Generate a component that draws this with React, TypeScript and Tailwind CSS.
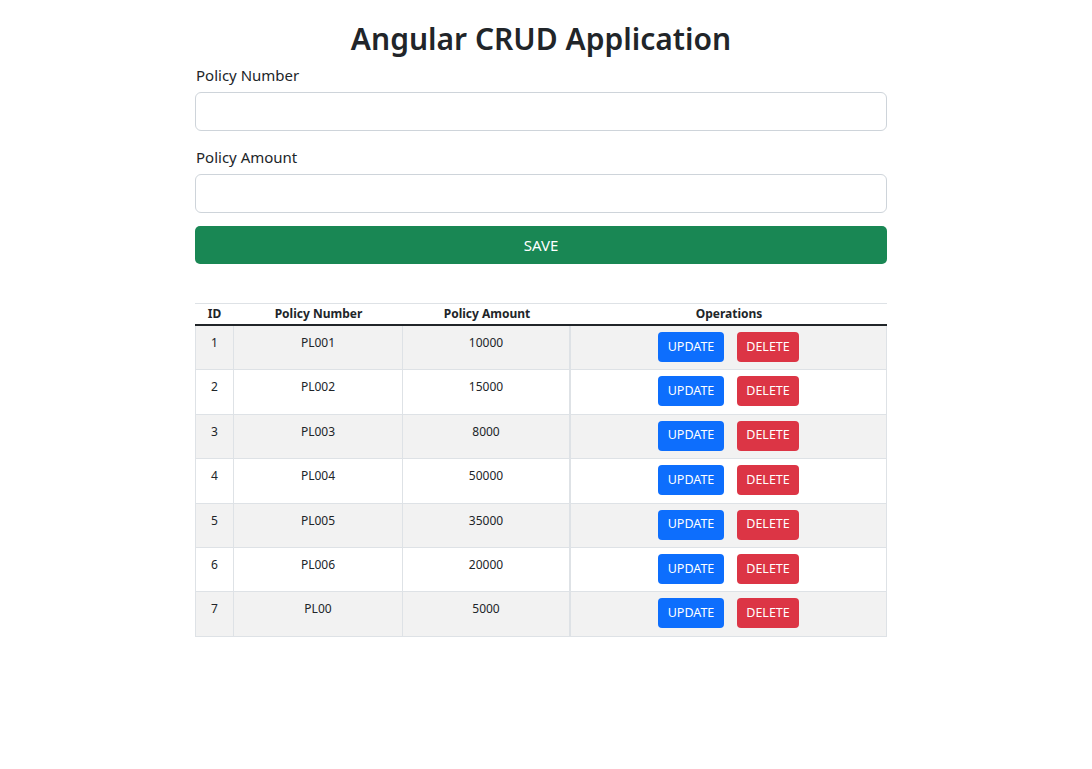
import React from 'react';

interface Policy {
  id: number;
  number: string;
  amount: number;
}

const policies: Policy[] = [
  { id: 1, number: 'PL001', amount: 10000 },
  { id: 2, number: 'PL002', amount: 15000 },
  { id: 3, number: 'PL003', amount: 8000 },
  { id: 4, number: 'PL004', amount: 50000 },
  { id: 5, number: 'PL005', amount: 35000 },
  { id: 6, number: 'PL006', amount: 20000 },
  { id: 7, number: 'PL00', amount: 5000 },
];

const font = "font-['Noto_Sans','Liberation_Sans',sans-serif]";

const App: React.FC = () => {
  return (
    <div className={`min-h-screen bg-white text-[#212529] ${font}`}>
      <div className="w-[692px] ml-[195px] pt-[18px]">
        <h1 className="text-center text-[30px] leading-[42px] font-semibold">Angular CRUD Application</h1>

        {/* Form */}
        <div className="mt-[3px]">
          <label className="block text-[15px] leading-[24px] pl-px">Policy Number</label>
          <input className="mt-[5px] block w-full h-[39px] border border-[#ced4da] rounded-[6px] outline-none" />
        </div>
        <div className="mt-[14px]">
          <label className="block text-[15px] leading-[24px] pl-px">Policy Amount</label>
          <input className="mt-[5px] block w-full h-[39px] border border-[#ced4da] rounded-[6px] outline-none" />
        </div>
        <button className="mt-[13px] w-full h-[38px] bg-[#198754] text-white text-[15px] rounded-[5px]">SAVE</button>

        {/* Table */}
        <div className="mt-[39px] text-[12px]">
          <div className="flex h-[23px] border-t border-[#dee2e6] border-b-2 border-b-[#212529] font-bold items-center">
            <div className="w-[39px] text-center">ID</div>
            <div className="w-[169px] text-center">Policy Number</div>
            <div className="w-[168px] text-center">Policy Amount</div>
            <div className="flex-1 text-center">Operations</div>
          </div>
          <div className="border-l border-r border-[#dee2e6]">
            {policies.map((p, i) => (
              <div
                key={p.id}
                className={`flex h-[44.4px] border-b border-[#dee2e6] ${i % 2 === 0 ? 'bg-[#f2f2f2]' : 'bg-white'}`}
              >
                <div className="w-[38px] text-center pt-[8px] border-r border-[#dee2e6]">{p.id}</div>
                <div className="w-[169px] text-center pt-[8px] border-r border-[#dee2e6]">{p.number}</div>
                <div className="w-[168px] text-center pt-[8px] border-r-2 border-[#dee2e6]">{p.amount}</div>
                <div className="flex-1 flex justify-center gap-[13px] pt-[6px]">
                  <button className="w-[66px] h-[30px] bg-[#0d6efd] text-white text-[12.5px] rounded-[4px]">UPDATE</button>
                  <button className="w-[62px] h-[30px] bg-[#dc3545] text-white text-[12.5px] rounded-[4px]">DELETE</button>
                </div>
              </div>
            ))}
          </div>
        </div>
      </div>
    </div>
  );
};

export default App;
